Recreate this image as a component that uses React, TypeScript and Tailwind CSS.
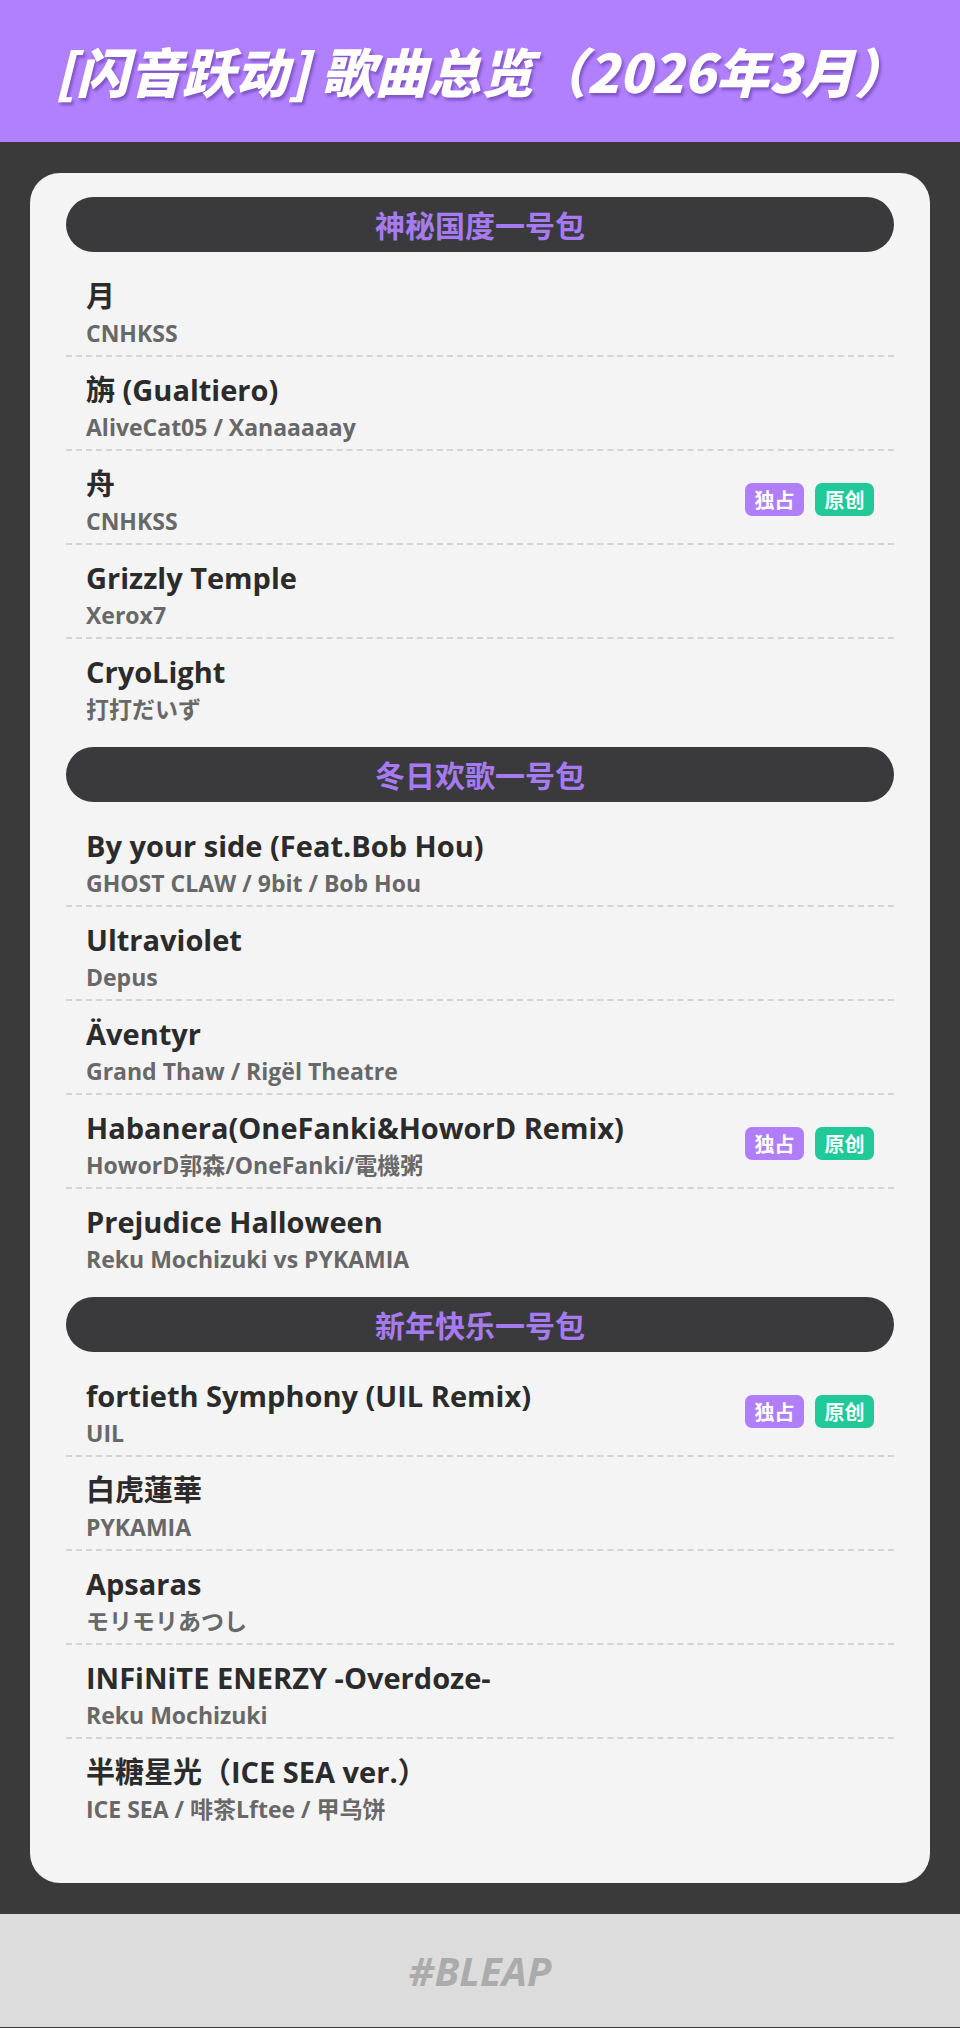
type Song = { title: string; artist: string; tags?: boolean }

const sections: { name: string; songs: Song[] }[] = [
  {
    name: '神秘国度一号包',
    songs: [
      { title: '月', artist: 'CNHKSS' },
      { title: '旃 (Gualtiero)', artist: 'AliveCat05 / Xanaaaaay' },
      { title: '舟', artist: 'CNHKSS', tags: true },
      { title: 'Grizzly Temple', artist: 'Xerox7' },
      { title: 'CryoLight', artist: '打打だいず' },
    ],
  },
  {
    name: '冬日欢歌一号包',
    songs: [
      { title: 'By your side (Feat.Bob Hou)', artist: 'GHOST CLAW / 9bit / Bob Hou' },
      { title: 'Ultraviolet', artist: 'Depus' },
      { title: 'Äventyr', artist: 'Grand Thaw / Rigël Theatre' },
      { title: 'Habanera(OneFanki&HoworD Remix)', artist: 'HoworD郭森/OneFanki/電機粥', tags: true },
      { title: 'Prejudice Halloween', artist: 'Reku Mochizuki vs PYKAMIA' },
    ],
  },
  {
    name: '新年快乐一号包',
    songs: [
      { title: 'fortieth Symphony (UIL Remix)', artist: 'UIL', tags: true },
      { title: '白虎蓮華', artist: 'PYKAMIA' },
      { title: 'Apsaras', artist: 'モリモリあつし' },
      { title: 'INFiNiTE ENERZY -Overdoze-', artist: 'Reku Mochizuki' },
      { title: '半糖星光（ICE SEA ver.）', artist: 'ICE SEA / 啡茶Lftee / 甲乌饼' },
    ],
  },
]

function SongRow({ song, last }: { song: Song; last: boolean }) {
  return (
    <div
      className={`flex items-center justify-between pl-[20px] pr-[20px] pt-[13px] pb-[8px] ${
        last ? '' : 'border-b-2 border-dashed border-[#d4d4d4]'
      }`}
    >
      <div className="flex flex-col">
        <div className="text-[29px] leading-[40px] font-bold text-[#2b2b2b]">{song.title}</div>
        <div className="mt-[3px] text-[23px] leading-[28px] font-bold text-[#686868]">{song.artist}</div>
      </div>
      {song.tags && (
        <div className="flex gap-[11px]">
          <span className="w-[59px] h-[33px] rounded-[7px] bg-[#b07ef8] text-white text-[20px] font-bold flex items-center justify-center font-['Noto_Sans_CJK_SC',sans-serif]">
            独占
          </span>
          <span className="w-[59px] h-[33px] rounded-[7px] bg-[#20c997] text-white text-[20px] font-bold flex items-center justify-center font-['Noto_Sans_CJK_SC',sans-serif]">
            原创
          </span>
        </div>
      )}
    </div>
  )
}

export default function App() {
  return (
    <div className="min-h-screen bg-[#3a3a3a] font-['Open_Sans','Noto_Sans_CJK_SC',sans-serif]">
      <header className="h-[142px] bg-[#b180fe] flex items-center px-[55px]">
        <h1 className="text-[53px] font-black italic text-white [text-shadow:2px_3px_3px_rgba(70,30,130,0.45)] font-['Noto_Sans_CJK_SC',sans-serif]">
          [闪音跃动] 歌曲总览（2026年3月）
        </h1>
      </header>

      <main className="px-[30px] py-[31px]">
        <div className="bg-[#f4f4f4] rounded-[30px] px-[36px] pt-[24px] pb-[36px]">
          {sections.map((sec) => (
            <section key={sec.name} className="mb-[16px]">
              <div className="h-[55px] rounded-full bg-[#3a3a3c] flex items-center justify-center mb-[11px]">
                <span className="text-[30px] font-bold text-[#a77bf0] font-['Noto_Sans_CJK_SC',sans-serif]">
                  {sec.name}
                </span>
              </div>
              {sec.songs.map((s, i) => (
                <SongRow key={s.title} song={s} last={i === sec.songs.length - 1} />
              ))}
            </section>
          ))}
        </div>
      </main>

      <footer className="h-[113px] bg-[#dcdcdc] flex items-center justify-center">
        <span className="text-[40px] font-bold italic text-[#ababab]">#BLEAP</span>
      </footer>
    </div>
  )
}
